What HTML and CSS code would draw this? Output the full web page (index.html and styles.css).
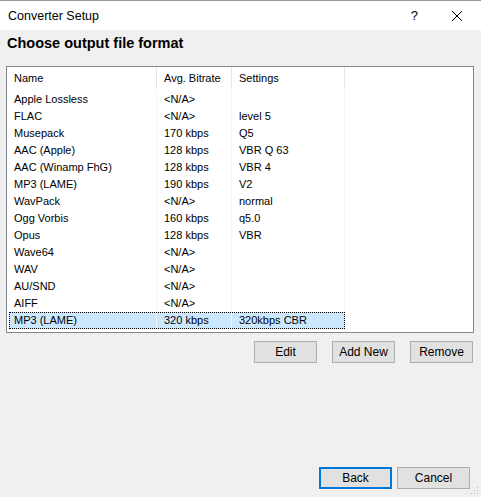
FILE: index.html
```html
<!doctype html>
<html lang="en">
  <head>
    <meta charset="UTF-8" />
    <title>Converter Setup</title>
    <link rel="stylesheet" href="styles.css">
  </head>
  <body>
    <div class="titlebar">
      <span class="title">Converter Setup</span>
      <span class="help">?</span>
      <svg class="close" width="12" height="12" viewBox="0 0 12 12">
        <path d="M1 1 L11 11 M11 1 L1 11" stroke="#000" stroke-width="1" fill="none" />
      </svg>
    </div>

    <div class="content">
      <h1>Choose output file format</h1>

      <div class="listbox">
        <div class="header">
          <div class="col name">Name</div>
          <div class="col rate">Avg. Bitrate</div>
          <div class="col settings">Settings</div>
        </div>
        <div class="rows">
          <div class="row"><div class="col name">Apple Lossless</div><div class="col rate">&lt;N/A&gt;</div><div class="col settings"></div></div>
          <div class="row"><div class="col name">FLAC</div><div class="col rate">&lt;N/A&gt;</div><div class="col settings">level 5</div></div>
          <div class="row"><div class="col name">Musepack</div><div class="col rate">170 kbps</div><div class="col settings">Q5</div></div>
          <div class="row"><div class="col name">AAC (Apple)</div><div class="col rate">128 kbps</div><div class="col settings">VBR Q 63</div></div>
          <div class="row"><div class="col name">AAC (Winamp FhG)</div><div class="col rate">128 kbps</div><div class="col settings">VBR 4</div></div>
          <div class="row"><div class="col name">MP3 (LAME)</div><div class="col rate">190 kbps</div><div class="col settings">V2</div></div>
          <div class="row"><div class="col name">WavPack</div><div class="col rate">&lt;N/A&gt;</div><div class="col settings">normal</div></div>
          <div class="row"><div class="col name">Ogg Vorbis</div><div class="col rate">160 kbps</div><div class="col settings">q5.0</div></div>
          <div class="row"><div class="col name">Opus</div><div class="col rate">128 kbps</div><div class="col settings">VBR</div></div>
          <div class="row"><div class="col name">Wave64</div><div class="col rate">&lt;N/A&gt;</div><div class="col settings"></div></div>
          <div class="row"><div class="col name">WAV</div><div class="col rate">&lt;N/A&gt;</div><div class="col settings"></div></div>
          <div class="row"><div class="col name">AU/SND</div><div class="col rate">&lt;N/A&gt;</div><div class="col settings"></div></div>
          <div class="row"><div class="col name">AIFF</div><div class="col rate">&lt;N/A&gt;</div><div class="col settings"></div></div>
          <div class="row selected"><div class="col name">MP3 (LAME)</div><div class="col rate">320 kbps</div><div class="col settings">320kbps CBR</div></div>
        </div>
      </div>

      <div class="actions">
        <button>Edit</button>
        <button>Add New</button>
        <button>Remove</button>
      </div>

      <div class="footer">
        <button class="default">Back</button>
        <button>Cancel</button>
      </div>
    </div>

    <svg class="grip" width="10" height="10" viewBox="0 0 10 10">
      <rect x="7" y="1" width="1" height="1" fill="#bbb" />
      <rect x="4" y="4" width="1" height="1" fill="#bbb" />
      <rect x="7" y="4" width="1" height="1" fill="#bbb" />
      <rect x="1" y="7" width="1" height="1" fill="#bbb" />
      <rect x="4" y="7" width="1" height="1" fill="#bbb" />
      <rect x="7" y="7" width="1" height="1" fill="#bbb" />
    </svg>
  </body>
</html>
```

FILE: styles.css
```css
body {
  margin: 0;
  width: 481px;
  height: 497px;
  background-color: #f0f0f0;
  font-family: "Liberation Sans", Arial, sans-serif;
  font-size: 11px;
  color: #000;
  position: relative;
  overflow: hidden;
}

.titlebar {
  height: 30px;
  background-color: #fff;
  border-top: 1px solid #999;
  display: flex;
  align-items: center;
  padding-left: 8px;
  box-sizing: border-box;
}

.title {
  flex: 1;
  font-size: 12.5px;
}

.help {
  font-size: 13px;
  margin-right: 33px;
}

.close {
  margin-right: 18px;
}

.content {
  padding: 0 7px 0 6px;
}

h1 {
  margin: 0;
  padding: 5px 0 0 1px;
  height: 30px;
  box-sizing: border-box;
  font-size: 14.5px;
  font-weight: bold;
}

.listbox {
  height: 267px;
  background-color: #fff;
  border: 1px solid #828790;
  box-sizing: border-box;
  margin-top: 6px;
}

.header {
  display: flex;
  height: 22px;
}

.header .col {
  border-right: 1px solid #e5e5e5;
  display: flex;
  align-items: center;
}

.col {
  box-sizing: border-box;
  padding-left: 7px;
  white-space: nowrap;
}

.header .name {
  width: 150px;
}

.name {
  width: 148px;
}

.rate {
  width: 75px;
}

.settings {
  width: 113px;
}

.rows {
  padding: 2px 0 0 2px;
}

.row {
  display: flex;
  height: 17px;
  align-items: center;
  box-sizing: border-box;
}

.row .col {
  border-right: 1px solid #f4f4f4;
  height: 17px;
  line-height: 17px;
}

.row .name {
  padding-left: 5px;
}

.row.selected {
  background-color: #cce8ff;
  outline: 1px dotted #000;
  outline-offset: -1px;
  width: 336px;
}

.actions {
  display: flex;
  justify-content: flex-end;
  gap: 15px;
  margin-top: 8px;
  padding-right: 1px;
}

button {
  font-family: "Liberation Sans", Arial, sans-serif;
  font-size: 12px;
  height: 22px;
  width: 63px;
  background-color: #e1e1e1;
  border: 1px solid #adadad;
  padding: 0;
  color: #000;
}

.footer {
  display: flex;
  justify-content: flex-end;
  gap: 5px;
  margin-top: 104px;
  padding-right: 4px;
}

.footer button {
  width: 73px;
}

.footer .default {
  border: 2px solid #0078d7;
}

.grip {
  position: absolute;
  right: 1px;
  bottom: 1px;
}
```
